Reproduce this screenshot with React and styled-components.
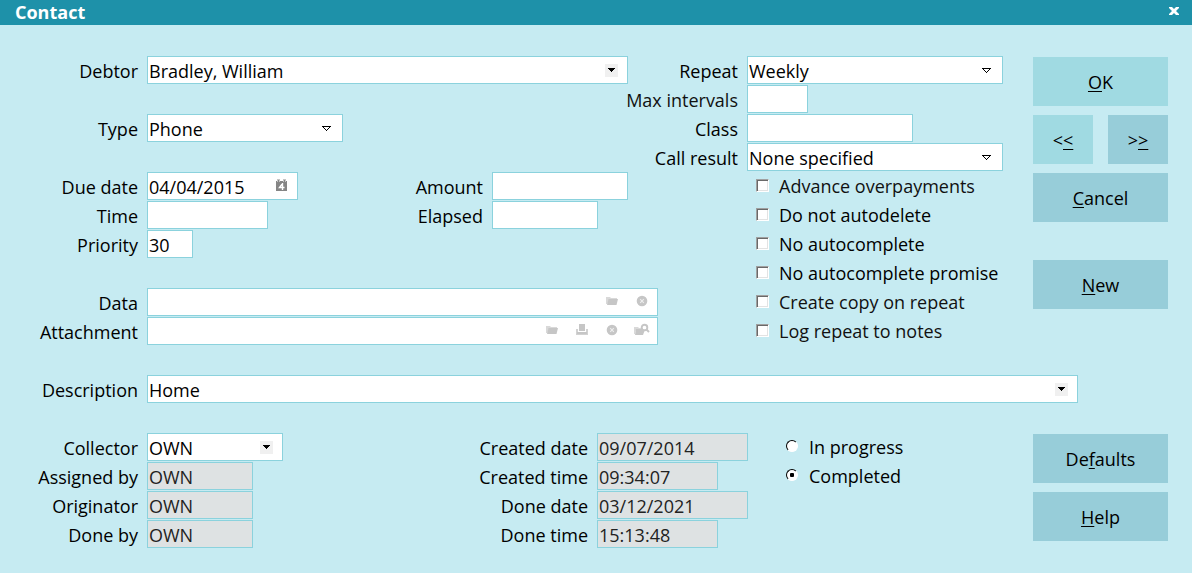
import React, { useId, useState } from 'react';
import styled, { createGlobalStyle, css } from 'styled-components';

const color = {
  title: '#1e91a9',
  surface: '#c6ebf2',
  border: '#8bd2dd',
  readOnly: '#dee2e3',
  button: '#97cdd9',
  buttonHot: '#a0dae2',
  icon: '#c6c6c6',
};

const GlobalStyle = createGlobalStyle`
  *, *::before, *::after { box-sizing: border-box; }
  html, body, #root { height: 100%; }
  body {
    margin: 0;
    background: ${color.surface};
    color: #000;
    font: 18px/26px "Open Sans", "Noto Sans", sans-serif;
  }
  button, input, select { font: inherit; color: inherit; }
`;

/* ---------- window ---------- */

const Window = styled.main`
  display: flex;
  flex-direction: column;
  min-height: 100%;
`;

const TitleBar = styled.header`
  display: flex;
  align-items: center;
  justify-content: space-between;
  height: 25px;
  padding: 0 13px 0 15px;
  background: ${color.title};
  color: #fff;
`;

const Title = styled.h1`
  margin: 0;
  padding-bottom: 2px;
  font-size: 18px;
  line-height: 24px;
  font-weight: 700;
`;

const CloseButton = styled.button`
  display: flex;
  padding: 0 0 3px;
  border: 0;
  background: none;
`;

const Form = styled.form`
  display: flex;
  flex-direction: column;
  gap: 30px;
  padding: 31px 24px 24px 0;
`;

/* ---------- layout ---------- */

const Upper = styled.div`
  display: grid;
  grid-template-columns: 138px minmax(0, 1fr) 101px 256px 156px;
  grid-auto-rows: 28px;
  gap: 1px 9px;
`;

const Cell = styled.div`
  grid-column: ${(p) => p.$col};
  grid-row: ${(p) => p.$row};
  margin-right: ${(p) => p.$inset || 0}px;
`;

const AmountCell = styled(Cell)`
  display: grid;
  grid-template-columns: auto 136px;
  grid-auto-rows: 28px;
  gap: 1px 9px;
  justify-self: end;
`;

const FieldGrid = styled.div`
  display: grid;
  grid-template-columns: ${(p) => p.$columns};
  grid-auto-rows: 28px;
  align-content: start;
  gap: 1px 9px;
`;

const DescriptionRow = styled(FieldGrid)`
  padding-right: 90px;
`;

const Lower = styled.div`
  display: grid;
  grid-template-columns: 283px minmax(0, 1fr) 285px 135px;
`;

const ButtonColumn = styled.div`
  display: flex;
  flex-direction: column;
  gap: 9px;
  width: 135px;
  padding-top: 1px;
`;

const UpperButtons = styled(ButtonColumn)`
  grid-column: 5;
  grid-row: 1 / 11;
  justify-self: end;
`;

const ButtonPair = styled.div`
  display: grid;
  grid-template-columns: 1fr 1fr;
  gap: 15px;
`;

/* ---------- controls ---------- */

const Label = styled.label`
  justify-self: end;
  padding-top: 2px;
  white-space: nowrap;
  color: ${(p) => (p.$soft ? '#111' : '#000')};
  ${(p) => p.$col && css`grid-column: ${p.$col};`}
  ${(p) => p.$row && css`grid-row: ${p.$row};`}
`;

const Box = styled.div`
  position: relative;
  width: ${(p) => (p.$width ? `${p.$width}px` : '100%')};
  height: 28px;
`;

const control = css`
  display: block;
  width: 100%;
  height: 28px;
  margin: 0;
  padding: 2px 1px 0;
  border: 1px solid ${color.border};
  border-radius: 0;
  background: #fff;
  line-height: 24px;
  &:focus { outline: 0; border-color: ${color.title}; }
`;

const Input = styled.input`
  ${control}
  &:read-only {
    background: ${color.readOnly};
    color: #222;
  }
`;

const Select = styled.select`
  ${control}
  appearance: none;
`;

const Adornment = styled.span`
  position: absolute;
  top: ${(p) => (p.$low ? 8 : 7)}px;
  right: 10px;
  display: flex;
  pointer-events: none;
`;

const IconBar = styled.div`
  position: absolute;
  top: 6px;
  right: 8px;
  display: flex;
  gap: 14px;
`;

const IconButton = styled.button`
  display: flex;
  justify-content: center;
  width: 16px;
  padding: 0;
  border: 0;
  background: none;
`;

const Choice = styled.label`
  display: flex;
  align-items: flex-start;
  gap: 10px;
  height: 28px;
  line-height: 28px;
  white-space: nowrap;
  color: ${(p) => (p.$soft ? '#111' : '#000')};
`;

const CheckList = styled.div`
  display: grid;
  grid-auto-rows: 28px;
  row-gap: 1px;
  grid-column: 4;
  grid-row: 5 / 11;
  padding-left: 9px;
`;

const Check = styled.input`
  appearance: none;
  flex: none;
  width: 13px;
  height: 13px;
  margin: 7px 0 0;
  border: 1px solid;
  border-color: #a0a0a0 #fff #fff #a0a0a0;
  background: #fff;
  box-shadow: inset 1px 1px #696969, inset -1px -1px #e3e3e3;
  &:checked { background: #333; }
`;

const RadioList = styled.fieldset`
  display: grid;
  grid-auto-rows: 28px;
  align-content: start;
  row-gap: 1px;
  margin: 0;
  padding: 0 0 0 38px;
  border: 0;
`;

const Radio = styled.input`
  appearance: none;
  flex: none;
  display: grid;
  place-items: center;
  width: 12px;
  height: 12px;
  margin: 7px 1px 0 0;
  border: 1px solid;
  border-color: #000 #fff #fff #000;
  border-radius: 50%;
  background: #fff;
  &:checked::before {
    content: '';
    width: 4px;
    height: 4px;
    border-radius: 1px;
    background: #000;
  }
`;

const Button = styled.button`
  height: 49px;
  margin-top: ${(p) => (p.$spaced ? 29 : 0)}px;
  padding: 1px 0 0;
  border: 0;
  background: ${(p) => (p.$hot ? color.buttonHot : color.button)};
  line-height: 26px;
`;

const Key = styled.span`
  text-decoration: underline;
  text-decoration-thickness: 1px;
  text-underline-offset: 2px;
`;

/* ---------- icons ---------- */

const CloseIcon = () => (
  <svg width="10" height="8" viewBox="0 0 10 8" aria-hidden="true">
    <path d="M0 0h3l2 2 2-2h3v1L7 4l3 3v1H7L5 6 3 8H0V7l3-3-3-3z" fill="#fff" />
  </svg>
);

const SolidArrow = () => (
  <svg width="13" height="13" viewBox="0 0 13 13" shapeRendering="crispEdges" aria-hidden="true">
    <path d="M0 0h13v13H0z" fill="#f0f0f0" />
    <path d="M3 4h7v1H9v1H8v1H7v1H6V7H5V6H4V5H3z" fill="#000" />
  </svg>
);

const HollowArrow = () => (
  <svg width="11" height="13" viewBox="0 0 11 13" shapeRendering="crispEdges" aria-hidden="true">
    <path
      d="M0 5h9v1H0zM1 6h1v1H1zM7 6h1v1H7zM2 7h1v1H2zM6 7h1v1H6zM3 8h1v1H3zM5 8h1v1H5zM4 9h1v1H4z"
      fill="#000"
    />
  </svg>
);

const CalendarIcon = () => (
  <svg width="12" height="13" viewBox="0 0 12 13" aria-hidden="true">
    <path d="M0 2h11v10H0z" fill="#858585" />
    <path d="M1 0h3v3H1zM7 0h3v3H7z" fill="#c4c4c4" />
    <path d="M2 1h1v2H2zM8 1h1v2H8z" fill="#858585" />
    <path d="M6.500 4v7M6.500 4.500 3.500 8.500H8.500" fill="none" stroke="#fff" strokeWidth="1.400" />
  </svg>
);

const FolderIcon = () => (
  <svg width="12" height="14" viewBox="0 0 12 14" aria-hidden="true">
    <path d="M0 3h4l1 1h6v2H3L1.500 10H0z" fill="#d9d9d9" />
    <path d="M2.500 5H12L10.500 11H1z" fill={color.icon} />
  </svg>
);

const ClearIcon = () => (
  <svg width="12" height="14" viewBox="0 0 12 14" aria-hidden="true">
    <circle cx="6" cy="7" r="5.300" fill={color.icon} />
    <path d="m4.200 5.200 3.600 3.600m0-3.600L4.200 8.800" stroke="#eee" strokeWidth="1.100" />
  </svg>
);

const PrinterIcon = () => (
  <svg width="12" height="14" viewBox="0 0 12 14" aria-hidden="true">
    <path d="M3 1h6v7H3z" fill={color.icon} />
    <path d="M0 6h2v3h8V6h2v6H0z" fill="#d2d2d2" />
    <path d="M1 9h10v2H1z" fill={color.icon} />
  </svg>
);

const FolderSearchIcon = () => (
  <svg width="16" height="14" viewBox="0 0 16 14" aria-hidden="true">
    <path d="M0 4h4l1 1h2v2H2L1 11H0z" fill="#d9d9d9" />
    <path d="M2 6h7l1.500 2L9 12H1z" fill={color.icon} />
    <circle cx="10.500" cy="4.500" r="2.800" fill="#fff" stroke={color.icon} strokeWidth="1.900" />
    <path d="m12.500 6.500 2.500 2.500" stroke={color.icon} strokeWidth="2" />
  </svg>
);

/* ---------- fields ---------- */

function TextField({ label, value = '', width, soft, col, row, boxCol, inset, readOnly, date, children }) {
  const id = useId();
  const [text, setText] = useState(value);
  const box = (
    <Box $width={width}>
      <Input id={id} value={text} readOnly={readOnly} onChange={(e) => setText(e.target.value)} />
      {date && <Adornment><CalendarIcon /></Adornment>}
      {children}
    </Box>
  );
  return (
    <>
      <Label htmlFor={id} $soft={soft} $col={col} $row={row}>{label}</Label>
      {boxCol ? <Cell $col={boxCol} $row={row} $inset={inset}>{box}</Cell> : box}
    </>
  );
}

function SelectField({ label, value, width, col, row, boxCol, hollow }) {
  const id = useId();
  const box = (
    <Box $width={width}>
      <Select id={id} defaultValue={value}>
        <option>{value}</option>
      </Select>
      <Adornment $low={!hollow}>{hollow ? <HollowArrow /> : <SolidArrow />}</Adornment>
    </Box>
  );
  return (
    <>
      <Label htmlFor={id} $col={col} $row={row}>{label}</Label>
      {boxCol ? <Cell $col={boxCol} $row={row}>{box}</Cell> : box}
    </>
  );
}

const options = [
  { text: 'Advance overpayments', soft: true },
  { text: 'Do not autodelete' },
  { text: 'No autocomplete' },
  { text: 'No autocomplete promise' },
  { text: 'Create copy on repeat', soft: true },
  { text: 'Log repeat to notes', soft: true },
];

export default function App() {
  return (
    <>
      <GlobalStyle />
      <Window>
        <TitleBar>
          <Title>Contact</Title>
          <CloseButton type="button" aria-label="Close"><CloseIcon /></CloseButton>
        </TitleBar>
        <Form onSubmit={(e) => e.preventDefault()}>
          <Upper>
            <SelectField label="Debtor" value="Bradley, William" col={1} row={1} boxCol={2} />
            <SelectField label="Type" value="Phone" width={196} col={1} row={3} boxCol={2} hollow />
            <TextField label="Due date" value="04/04/2015" width={151} col={1} row={5} boxCol={2} date />
            <TextField label="Time" width={121} col={1} row={6} boxCol={2} />
            <TextField label="Priority" value="30" width={46} col={1} row={7} boxCol={2} />
            <AmountCell $col={2} $row="5 / 7">
              <TextField label="Amount" />
              <TextField label="Elapsed" width={106} />
            </AmountCell>

            <TextField label="Data" col={1} row={9} boxCol="2 / 4" inset={80}>
              <IconBar>
                <IconButton type="button" aria-label="Open data"><FolderIcon /></IconButton>
                <IconButton type="button" aria-label="Clear data"><ClearIcon /></IconButton>
              </IconBar>
            </TextField>
            <TextField label="Attachment" col={1} row={10} boxCol="2 / 4" inset={80}>
              <IconBar>
                <IconButton type="button" aria-label="Open attachment"><FolderIcon /></IconButton>
                <IconButton type="button" aria-label="Scan attachment"><PrinterIcon /></IconButton>
                <IconButton type="button" aria-label="Clear attachment"><ClearIcon /></IconButton>
                <IconButton type="button" aria-label="Browse attachments"><FolderSearchIcon /></IconButton>
              </IconBar>
            </TextField>

            <SelectField label="Repeat" value="Weekly" col={3} row={1} boxCol={4} hollow />
            <TextField label="Max intervals" width={61} col={3} row={2} boxCol={4} soft />
            <TextField label="Class" width={166} col={3} row={3} boxCol={4} />
            <SelectField label="Call result" value="None specified" col={3} row={4} boxCol={4} hollow />

            <CheckList>
              {options.map((o) => (
                <Choice key={o.text} $soft={o.soft}>
                  <Check type="checkbox" />
                  {o.text}
                </Choice>
              ))}
            </CheckList>

            <UpperButtons>
              <Button type="submit" $hot><Key>O</Key>K</Button>
              <ButtonPair>
                <Button type="button" $hot aria-label="Previous">&lt;<Key>&lt;</Key></Button>
                <Button type="button" aria-label="Next">&gt;<Key>&gt;</Key></Button>
              </ButtonPair>
              <Button type="button"><Key>C</Key>ancel</Button>
              <Button type="button" $spaced><Key>N</Key>ew</Button>
            </UpperButtons>
          </Upper>

          <DescriptionRow $columns="138px minmax(0, 1fr)">
            <SelectField label="Description" value="Home" />
          </DescriptionRow>

          <Lower>
            <FieldGrid $columns="138px 136px">
              <SelectField label="Collector" value="OWN" />
              <TextField label="Assigned by" value="OWN" width={106} readOnly />
              <TextField label="Originator" value="OWN" width={106} readOnly />
              <TextField label="Done by" value="OWN" width={106} readOnly />
            </FieldGrid>
            <FieldGrid $columns="minmax(0, 1fr) 151px">
              <TextField label="Created date" value="09/07/2014" readOnly />
              <TextField label="Created time" value="09:34:07" width={121} readOnly />
              <TextField label="Done date" value="03/12/2021" readOnly />
              <TextField label="Done time" value="15:13:48" width={121} readOnly />
            </FieldGrid>
            <RadioList aria-label="Status">
              <Choice><Radio type="radio" name="status" />In progress</Choice>
              <Choice><Radio type="radio" name="status" defaultChecked />Completed</Choice>
            </RadioList>
            <ButtonColumn>
              <Button type="button">De<Key>f</Key>aults</Button>
              <Button type="button"><Key>H</Key>elp</Button>
            </ButtonColumn>
          </Lower>
        </Form>
      </Window>
    </>
  );
}
